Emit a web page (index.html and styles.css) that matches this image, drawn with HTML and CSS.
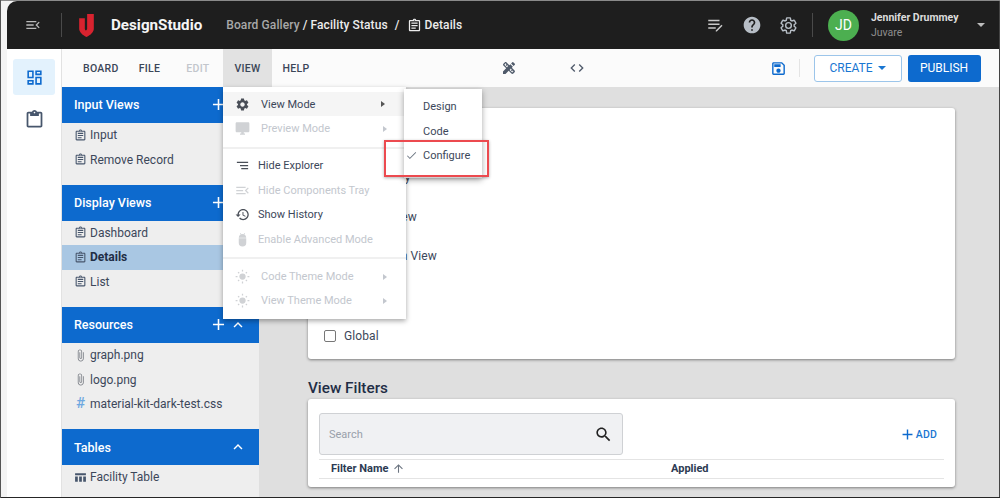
FILE: index.html
```html
<!DOCTYPE html>
<html lang="en">
<head>
<meta charset="utf-8">
<title>DesignStudio - Details</title>
<link rel="stylesheet" href="styles.css">
</head>
<body>
<svg class="sprite" aria-hidden="true">
  <symbol id="i-assign" viewBox="0 0 24 24"><path d="M19 3h-4.18C14.4 1.84 13.3 1 12 1s-2.4.84-2.82 2H5c-1.1 0-2 .9-2 2v14c0 1.1.9 2 2 2h14c1.1 0 2-.9 2-2V5c0-1.1-.9-2-2-2zm-7-.25c.41 0 .75.34.75.75s-.34.75-.75.75-.75-.34-.75-.75.34-.75.75-.75zM19 19H5V5h14v14zM7 15h7v2H7zm0-4h10v2H7zm0-4h10v2H7z"/></symbol>
  <symbol id="i-paste" viewBox="0 0 24 24"><path d="M19 3h-4.18C14.4 1.84 13.3 1 12 1c-1.3 0-2.4.84-2.82 2H5c-1.1 0-2 .9-2 2v14c0 1.1.9 2 2 2h14c1.1 0 2-.9 2-2V5c0-1.1-.9-2-2-2zm-7 0c.55 0 1 .45 1 1s-.45 1-1 1-1-.45-1-1 .45-1 1-1zm7 16H5V5h2v3h10V5h2v14z"/></symbol>
  <symbol id="i-dash" viewBox="0 0 24 24"><path d="M19 5v2h-4V5h4M9 5v6H5V5h4m10 8v6h-4v-6h4M9 17v2H5v-2h4M21 3h-8v6h8V3zM11 3H3v10h8V3zm10 8h-8v10h8V11zm-10 4H3v6h8v-6z"/></symbol>
  <symbol id="i-gear" viewBox="0 0 24 24"><path d="M19.14 12.94c.04-.3.06-.61.06-.94 0-.32-.02-.64-.07-.94l2.03-1.58c.18-.14.23-.41.12-.61l-1.92-3.32c-.12-.22-.37-.29-.59-.22l-2.39.96c-.5-.38-1.03-.7-1.62-.94l-.36-2.54c-.04-.24-.24-.41-.48-.41h-3.84c-.24 0-.43.17-.47.41l-.36 2.54c-.59.24-1.13.57-1.62.94l-2.39-.96c-.22-.08-.47 0-.59.22L2.74 8.87c-.12.21-.08.47.12.61l2.03 1.58c-.05.3-.09.63-.09.94s.02.64.07.94l-2.03 1.58c-.18.14-.23.41-.12.61l1.92 3.32c.12.22.37.29.59.22l2.39-.96c.5.38 1.03.7 1.62.94l.36 2.54c.05.24.24.41.48.41h3.84c.24 0 .44-.17.47-.41l.36-2.54c.59-.24 1.13-.56 1.62-.94l2.39.96c.22.08.47 0 .59-.22l1.92-3.32c.12-.22.07-.47-.12-.61l-2.01-1.58zM12 15.6c-1.98 0-3.6-1.62-3.6-3.6s1.62-3.6 3.6-3.6 3.6 1.62 3.6 3.6-1.62 3.6-3.6 3.6z"/></symbol>
  <symbol id="i-help" viewBox="0 0 24 24"><path d="M12 2C6.48 2 2 6.48 2 12s4.48 10 10 10 10-4.48 10-10S17.52 2 12 2zm1 17h-2v-2h2v2zm2.07-7.75l-.9.92C13.45 12.9 13 13.5 13 15h-2v-.5c0-1.1.45-2.1 1.17-2.83l1.24-1.26c.37-.36.59-.86.59-1.41 0-1.1-.9-2-2-2s-2 .9-2 2H8c0-2.21 1.79-4 4-4s4 1.79 4 4c0 .88-.36 1.68-.93 2.25z"/></symbol>
  <symbol id="i-desktop" viewBox="0 0 24 24"><path d="M21 2H3c-1.1 0-2 .9-2 2v12c0 1.1.9 2 2 2h7v2H8v2h8v-2h-2v-2h7c1.1 0 2-.9 2-2V4c0-1.1-.9-2-2-2z"/></symbol>
  <symbol id="i-history" viewBox="0 0 24 24"><path d="M13 3c-4.97 0-9 4.03-9 9H1l3.89 3.89.07.14L9 12H6c0-3.87 3.13-7 7-7s7 3.13 7 7-3.13 7-7 7c-1.93 0-3.68-.79-4.94-2.06l-1.42 1.42C8.27 19.99 10.51 21 13 21c4.97 0 9-4.03 9-9s-4.03-9-9-9zm-1 5v5l4.28 2.54.72-1.21-3.5-2.08V8H12z"/></symbol>
  <symbol id="i-save" viewBox="0 0 24 24"><path d="M17 3H5c-1.11 0-2 .9-2 2v14c0 1.1.89 2 2 2h14c1.1 0 2-.9 2-2V7l-4-4zm2 16H5V5h11.17L19 7.83V19zm-7-7c-1.66 0-3 1.34-3 3s1.34 3 3 3 3-1.34 3-3-1.34-3-3-3zM6 6h9v4H6z"/></symbol>
  <symbol id="i-search" viewBox="0 0 24 24"><path d="M15.5 14h-.79l-.28-.27C15.41 12.59 16 11.11 16 9.5 16 5.91 13.09 3 9.5 3S3 5.91 3 9.5 5.91 16 9.5 16c1.61 0 3.09-.59 4.23-1.57l.27.28v.79l5 4.99L20.49 19l-4.99-5zm-6 0C7.01 14 5 11.99 5 9.5S7.01 5 9.5 5 14 7.01 14 9.5 11.99 14 9.5 14z"/></symbol>
  <symbol id="i-clip" viewBox="0 0 24 24"><path d="M16.5 6v11.5c0 2.21-1.79 4-4 4s-4-1.79-4-4V5c0-1.38 1.12-2.5 2.5-2.5s2.5 1.12 2.5 2.5v10.5c0 .55-.45 1-1 1s-1-.45-1-1V6H10v9.5c0 1.38 1.12 2.5 2.5 2.5s2.5-1.12 2.5-2.5V5c0-2.21-1.79-4-4-4S7 2.79 7 5v12.5c0 3.04 2.46 5.5 5.5 5.5s5.5-2.46 5.5-5.5V6h-1.5z"/></symbol>
  <symbol id="i-code" viewBox="0 0 24 24"><path d="M9.4 16.6L4.8 12l4.6-4.6L8 6l-6 6 6 6 1.4-1.4zm5.2 0l4.6-4.6-4.6-4.6L16 6l6 6-6 6-1.4-1.4z"/></symbol>
  <symbol id="i-design" viewBox="0 0 24 24"><path d="M16.24 11.51l1.57-1.57-3.75-3.75-1.57 1.57L8.35 3.63c-.78-.78-2.05-.78-2.83 0l-1.9 1.9c-.78.78-.78 2.05 0 2.83l4.13 4.13L3 17.25V21h3.75l4.76-4.76 4.13 4.13c.95.95 2.23.6 2.83 0l1.9-1.9c.78-.78.78-2.05 0-2.83l-4.13-4.13zm-7.06-.44L5.04 6.94l1.89-1.9L8.2 6.31 7.02 7.5l1.41 1.41 1.19-1.19 1.2 1.2-1.64 1.65zm7.88 7.89l-4.13-4.13 1.9-1.9 1.27 1.27-1.19 1.18 1.41 1.41 1.18-1.18 1.27 1.27-1.71 1.08zM20.71 7.04a.996.996 0 000-1.41l-2.34-2.34a1.001 1.001 0 00-1.41 0l-1.83 1.83 3.75 3.75 1.83-1.83z"/></symbol>
  <symbol id="i-sun" viewBox="0 0 24 24"><circle cx="12" cy="12" r="5"/><path d="M11 1h2v3h-2zM11 20h2v3h-2zM1 11h3v2H1zM20 11h3v2h-3zM4.2 5.6l1.4-1.4 1.8 1.8L6 7.4zM16.6 18l1.4-1.4 1.8 1.8-1.4 1.4zM4.2 18.4L6 16.6 7.4 18l-1.8 1.8zM16.6 6l1.8-1.8 1.4 1.4L18 7.4z"/></symbol>
  <symbol id="i-android" viewBox="0 0 24 24"><path d="M6 10h12v7a6 6 0 0 1-12 0zM6 9a6 6 0 0 1 3-5L8 2l1-.5 1.2 2a6 6 0 0 1 3.6 0l1.2-2 1 .5-1 2a6 6 0 0 1 3 5z"/></symbol>
  <symbol id="i-tray" viewBox="0 0 24 24"><path d="M2 6h15v2H2zM2 11h11v2H2zM2 16h15v2H2zM22 8.4L18.4 12l3.6 3.6-1.4 1.4-5-5 5-5z"/></symbol>
  <symbol id="i-explorer" viewBox="0 0 24 24"><path d="M3 6h18v2H3zM8 11h13v2H8zM10 16h11v2H10z"/></symbol>
  <symbol id="i-note" viewBox="0 0 24 24"><path d="M3 5h15v2H3zM3 10h15v2H3zM3 15h10v2H3zM20.6 11.6l1.4 1.4-7.6 7.6H13v-1.4z"/></symbol>
  <symbol id="i-table" viewBox="0 0 24 24"><path d="M2 4h20v4H2zM2 10h5v10H2zM9.5 10h5v10h-5zM17 10h5v10h-5z"/></symbol>
  <symbol id="i-plus" viewBox="0 0 24 24"><path d="M19 13h-6v6h-2v-6H5v-2h6V5h2v6h6z"/></symbol>
  <symbol id="i-up" viewBox="0 0 24 24"><path d="M12 8l-6 6 1.41 1.41L12 10.83l4.59 4.58L18 14z"/></symbol>
  <symbol id="i-arrow" viewBox="0 0 24 24"><path d="M4 12l1.41 1.41L11 7.83V20h2V7.83l5.58 5.59L20 12l-8-8z"/></symbol>
  <symbol id="i-check" viewBox="0 0 24 24"><path d="M9 16.2L4.8 12l-1.1 1.1L9 18.4 20.6 6.8l-1.1-1.1z"/></symbol>
</svg>

<div class="screen">
  <header class="topbar">
    <svg class="ico topbar-menu"><use href="#i-tray"/></svg>
    <span class="topbar-sep"></span>
    <svg class="logo" viewBox="0 0 14 22"><path d="M7.6 0H14v14c0 3-3 6-7 8-4-2-7-5-7-8V4h5.4v10c0 .6.3 1.2.9 1.8.8-.5 1.3-1.1 1.3-1.8z"/></svg>
    <span class="brand">DesignStudio</span>
    <nav class="crumbs">
      <span class="crumb-muted">Board Gallery</span>
      <span class="crumb-sl">/</span>
      <span>Facility Status</span>
      <span class="crumb-sl2">/</span>
      <svg class="ico crumb-ico"><use href="#i-assign"/></svg>
      <span>Details</span>
    </nav>
    <div class="topbar-right">
      <svg class="ico top-note"><use href="#i-note"/></svg>
      <svg class="ico top-help"><use href="#i-help"/></svg>
      <svg class="ico top-gear"><use href="#i-gear"/></svg>
      <span class="topbar-sep top-sep2"></span>
      <span class="avatar">JD</span>
      <div class="user">
        <div class="user-name">Jennifer Drummey</div>
        <div class="user-org">Juvare</div>
      </div>
      <span class="user-caret"></span>
    </div>
  </header>

  <div class="body">
    <aside class="rail">
      <div class="rail-btn rail-active"><svg class="ico"><use href="#i-dash"/></svg></div>
      <div class="rail-btn"><svg class="ico rail-paste"><use href="#i-paste"/></svg></div>
    </aside>

    <div class="work">
      <div class="toolbar">
        <span class="tb-item">BOARD</span>
        <span class="tb-item">FILE</span>
        <span class="tb-item tb-dis">EDIT</span>
        <span class="tb-item tb-on">VIEW</span>
        <span class="tb-item tb-help">HELP</span>
        <div class="tb-center">
          <svg class="ico tb-design"><use href="#i-design"/></svg>
          <svg class="ico tb-code"><use href="#i-code"/></svg>
        </div>
        <svg class="ico tb-save"><use href="#i-save"/></svg>
        <span class="tb-sep"></span>
        <span class="btn btn-line">CREATE<span class="btn-caret"></span></span>
        <span class="btn btn-fill">PUBLISH</span>
      </div>

      <div class="panes">
        <aside class="side">
          <section class="sec">
            <div class="sec-head sec-head-first"><span>Input Views</span><span class="sec-tools"><svg class="ico"><use href="#i-plus"/></svg><svg class="ico"><use href="#i-up"/></svg></span></div>
            <div class="sec-row"><svg class="ico"><use href="#i-assign"/></svg>Input</div>
            <div class="sec-row"><svg class="ico"><use href="#i-assign"/></svg>Remove Record</div>
          </section>
          <section class="sec">
            <div class="sec-head"><span>Display Views</span><span class="sec-tools"><svg class="ico"><use href="#i-plus"/></svg><svg class="ico"><use href="#i-up"/></svg></span></div>
            <div class="sec-row"><svg class="ico"><use href="#i-assign"/></svg>Dashboard</div>
            <div class="sec-row sec-sel"><svg class="ico"><use href="#i-assign"/></svg>Details</div>
            <div class="sec-row"><svg class="ico"><use href="#i-assign"/></svg>List</div>
          </section>
          <section class="sec">
            <div class="sec-head"><span>Resources</span><span class="sec-tools"><svg class="ico"><use href="#i-plus"/></svg><svg class="ico"><use href="#i-up"/></svg></span></div>
            <div class="sec-row"><svg class="ico ico-clip"><use href="#i-clip"/></svg>graph.png</div>
            <div class="sec-row"><svg class="ico ico-clip"><use href="#i-clip"/></svg>logo.png</div>
            <div class="sec-row"><span class="hash">#</span>material-kit-dark-test.css</div>
          </section>
          <section class="sec">
            <div class="sec-head"><span>Tables</span><span class="sec-tools"><svg class="ico"><use href="#i-up"/></svg></span></div>
            <div class="sec-row"><svg class="ico"><use href="#i-table"/></svg>Facility Table</div>
          </section>
        </aside>

        <main class="main">
          <div class="card card-opts">
            <label class="opt"><span class="box"></span>Display Only</label>
            <label class="opt"><span class="box"></span>Landing View</label>
            <label class="opt"><span class="box"></span>Information View</label>
            <label class="opt"><span class="box"></span></label>
            <label class="opt"><span class="box"></span>Global</label>
          </div>
          <h2 class="heading">View Filters</h2>
          <div class="card card-filters">
            <div class="filter-top">
              <div class="search"><span>Search</span><svg class="ico"><use href="#i-search"/></svg></div>
              <span class="add"><svg class="ico"><use href="#i-plus"/></svg>ADD</span>
            </div>
            <div class="thead">
              <span class="th-name">Filter Name<svg class="ico"><use href="#i-arrow"/></svg></span>
              <span>Applied</span>
            </div>
          </div>
        </main>
      </div>
    </div>
  </div>

  <div class="menu">
    <div class="mi mi-sub mi-hover"><svg class="ico"><use href="#i-gear"/></svg><span>View Mode</span><i class="tri"></i></div>
    <div class="mi mi-sub mi-dis"><svg class="ico"><use href="#i-desktop"/></svg><span>Preview Mode</span><i class="tri"></i></div>
    <div class="mi-div"></div>
    <div class="mi"><svg class="ico"><use href="#i-explorer"/></svg><span>Hide Explorer</span></div>
    <div class="mi mi-dis"><svg class="ico"><use href="#i-tray"/></svg><span>Hide Components Tray</span></div>
    <div class="mi"><svg class="ico"><use href="#i-history"/></svg><span>Show History</span></div>
    <div class="mi mi-dis"><svg class="ico"><use href="#i-android"/></svg><span>Enable Advanced Mode</span></div>
    <div class="mi-div"></div>
    <div class="mi mi-sub mi-dis"><svg class="ico"><use href="#i-sun"/></svg><span>Code Theme Mode</span><i class="tri"></i></div>
    <div class="mi mi-sub mi-dis"><svg class="ico"><use href="#i-sun"/></svg><span>View Theme Mode</span><i class="tri"></i></div>
  </div>

  <div class="submenu">
    <div class="si">Design</div>
    <div class="si">Code</div>
    <div class="si"><svg class="ico si-check"><use href="#i-check"/></svg>Configure</div>
  </div>
  <div class="callout"></div>
</div>
</body>
</html>
```
FILE: styles.css
```css
* { box-sizing: border-box; }
html, body { margin: 0; padding: 0; }
body { width: 1000px; height: 498px; overflow: hidden; font-family: Roboto, "Liberation Sans", sans-serif; }
.sprite { display: none; }
.ico { width: 16px; height: 16px; fill: currentColor; flex: none; display: block; }

.screen { position: relative; width: 1000px; height: 498px; display: flex; flex-direction: column; padding: 1px 1px 1px 6px; background: #f4f4f4; border-left: 1px solid #555; box-shadow: inset 0 1px 0 #8a8a8a, inset 0 -1px 0 #262626, inset -1px 0 0 #444; }

/* header */
.topbar { height: 48px; flex: none; background: #1e1e1e; border-radius: 10px 0 0 0; display: flex; align-items: center; color: #f0f0f0; }
.topbar-menu { width: 16px; height: 16px; margin-left: 18px; color: #b9b9b9; }
.topbar-sep { width: 1px; height: 24px; background: #4a4a4a; margin-left: 20px; }
.logo { width: 15px; height: 23px; fill: #d8232f; margin-left: 17px; }
.brand { font-size: 15.2px; font-weight: 700; margin-left: 17px; color: #f5f5f5; }
.crumbs { display: flex; align-items: center; margin-left: 24px; font-size: 12px; letter-spacing: .1px; font-weight: 500; color: #ececec; }
.crumb-muted { color: #a8a8a8; }
.crumb-sl { margin: 0 3px; }
.crumb-sl2 { margin: 0 7px; }
.crumb-ico { width: 15px; height: 15px; margin-right: 3px; }
.topbar-right { margin-left: auto; display: flex; align-items: center; }
.top-note { width: 18px; height: 18px; color: #c9c9c9; }
.top-help { width: 20px; height: 20px; color: #b7bec6; margin-left: 18px; }
.top-gear { width: 19px; height: 19px; margin-left: 17px; fill: none; stroke: #b7bec6; stroke-width: 1.8; }
.top-sep2 { margin-left: 14px; }
.avatar { width: 31px; height: 31px; border-radius: 50%; background: #4caf50; color: #fff; font-size: 14px; display: flex; align-items: center; justify-content: center; margin-left: 15px; }
.user { margin-left: 12px; width: 106px; line-height: 15px; }
.user-name { font-size: 10.5px; font-weight: 700; color: #dcdcdc; }
.user-org { font-size: 10.5px; color: #8f8f8f; }
.user-caret { border: 4px solid transparent; border-top: 4px solid #bcbcbc; border-bottom: 0; margin-right: 14px; }

.body { flex: 1; display: flex; min-height: 0; background: #fff; }

/* rail */
.rail { width: 55px; flex: none; padding: 10px 6px 0; background: #fff; border-right: 1px solid #e2e2e2; display: flex; flex-direction: column; }
.rail-btn { height: 36px; border-radius: 3px; display: flex; align-items: center; justify-content: center; color: #47566c; }
.rail-btn + .rail-btn { margin-top: 6px; }
.rail-active { background: #e3f2fd; color: #0d6ace; }
.rail-active .ico { width: 19px; height: 19px; }
.rail-paste { width: 21px; height: 21px; }

.work { flex: 1; display: flex; flex-direction: column; min-width: 0; }

/* toolbar */
.toolbar { height: 38px; flex: none; display: flex; align-items: stretch; background: #fbfbfb; font-size: 10.5px; font-weight: 500; color: #3b4658; letter-spacing: .3px; }
.tb-item { display: flex; align-items: center; padding: 0 10px; }
.tb-item:first-child { margin-left: 11px; }
.tb-dis { color: #c2c6cc; padding: 0 2px; margin-left: 14px; margin-right: 12px; }
.tb-on { background: #e2e2e2; padding: 0 11px; }
.tb-help { padding-left: 11px; }
.tb-center { display: flex; align-items: center; margin-left: 181px; color: #4f5a6a; }
.tb-design { width: 16px; height: 16px; }
.tb-code { width: 16px; height: 16px; margin-left: 52px; }
.tb-save { width: 17px; height: 17px; color: #0d6ace; align-self: center; margin-left: 185px; }
.tb-sep { width: 1px; height: 18px; background: #e4e4e4; align-self: center; margin-left: 12px; }
.btn { align-self: center; height: 27px; border-radius: 3px; display: flex; align-items: center; justify-content: center; font-size: 12px; font-weight: 400; letter-spacing: 0; }
.btn-line { width: 88px; margin-left: 14px; border: 1px solid #9cc5ea; color: #1976d2; background: #fff; }
.btn-caret { border: 4px solid transparent; border-top: 4px solid #1976d2; border-bottom: 0; margin-left: 5px; }
.btn-fill { width: 73px; margin-left: 6px; background: #0d6ace; color: #fff; }

.panes { flex: 1; display: flex; min-height: 0; }

/* sidebar */
.side { width: 197px; flex: none; background: #eeeeee; overflow: hidden; font-size: 12px; color: #3c475a; }
.sec { padding-bottom: 13px; }
.sec-head { height: 36px; background: #0d6ace; color: #fff; font-size: 12.5px; font-weight: 500; display: flex; align-items: center; justify-content: space-between; padding: 0 12px; }
.sec-head-first { padding-bottom: 1px; }
.sec-tools { display: flex; align-items: center; }
.sec-tools .ico { width: 19px; height: 19px; }
.sec-tools .ico:last-child { width: 18px; height: 18px; margin-left: 1px; }
.sec-row { height: 24.4px; display: flex; align-items: center; padding-left: 12px; }
.sec-row .ico { width: 13px; height: 13px; margin-right: 3px; color: #47566c; }
.sec-row .ico-clip { color: #7b7f86; }
.sec-sel { background: #a9c7e3; font-weight: 700; color: #1f2e46; }
.hash { width: 13px; margin-right: 3px; color: #6ea8e0; font-size: 15px; font-weight: 500; line-height: 1; text-align: center; }

/* main */
.main { flex: 1; min-width: 0; background: #dfdfdf; padding: 21px 44px 0 49px; overflow: hidden; color: #3c475a; }
.card { background: #fff; border-radius: 3px; box-shadow: 0 1px 3px rgba(0,0,0,.45); }
.card-opts { height: 251px; padding-top: 49px; }
.opt { height: 39.8px; display: flex; align-items: center; padding-left: 16px; font-size: 12px; letter-spacing: .1px; }
.box { width: 12px; height: 12px; border: 1.5px solid #777; border-radius: 2px; margin-right: 8px; }
.heading { margin: 20px 0 0; height: 20px; line-height: 18px; font-size: 15.3px; font-weight: 500; color: #1f2e46; }
.card-filters { height: 88px; padding: 14px 11px 0; }
.filter-top { display: flex; align-items: center; justify-content: space-between; height: 42px; }
.search { width: 304px; height: 42px; background: #f0f1f3; border: 1px solid #cfd1d4; border-radius: 3px; display: flex; align-items: center; justify-content: space-between; padding: 0 9px 0 9px; font-size: 11px; color: #99a0aa; }
.search .ico { width: 19px; height: 19px; color: #222; }
.add { display: flex; align-items: center; font-size: 10.5px; font-weight: 500; color: #1976d2; margin-right: 7px; letter-spacing: .2px; }
.add .ico { width: 17px; height: 17px; color: #0d6ace; }
.thead { margin-top: 4px; height: 20px; padding-bottom: 2px; border-top: 1px solid #e4e4e4; border-bottom: 1px solid #e4e4e4; display: flex; align-items: center; padding-left: 12px; font-size: 11px; font-weight: 700; color: #2c3a52; }
.th-name { width: 340px; display: flex; align-items: center; }
.th-name .ico { width: 13px; height: 13px; color: #6b7480; margin-left: 4px; }

/* floating menus */
.menu { position: absolute; left: 222px; top: 87px; width: 183px; height: 232px; background: #fff; padding-top: 5px; box-shadow: 0 2px 5px rgba(0,0,0,.35); font-size: 11px; color: #3c475a; }
.mi { height: 24.4px; display: flex; align-items: center; padding-left: 12px; }
.mi .ico { width: 15px; height: 15px; color: #4a4f58; margin-right: 8px; }
.mi-sub span { margin-left: 3px; flex: 1; }
.mi-hover { background: #f5f5f5; margin-right: 2px; }
.mi-dis { color: #c3c7ce; }
.mi-dis .ico { color: #d0d2d5; }
.mi-div { height: 2px; background: #f0f0f0; margin: 6px 0 5px; }
.tri { border: 3.5px solid transparent; border-left: 4px solid #555; border-right: 0; margin-right: 19px; }
.mi-dis .tri { border-left-color: #c3c7ce; }
.submenu { position: absolute; left: 403px; top: 89px; width: 78px; height: 89px; background: #fff; padding-top: 5.5px; box-shadow: 0 2px 6px rgba(0,0,0,.35); font-size: 11px; color: #3c475a; }
.si { position: relative; height: 24.4px; display: flex; align-items: center; padding-left: 19px; }
.si-check { position: absolute; left: 1px; top: 6px; width: 13px; height: 13px; color: #6b7480; }
.callout { position: absolute; left: 383px; top: 140px; width: 105px; height: 37px; border: 2px solid #ec4a4f; box-shadow: 0 1px 3px rgba(0,0,0,.3); }
```
